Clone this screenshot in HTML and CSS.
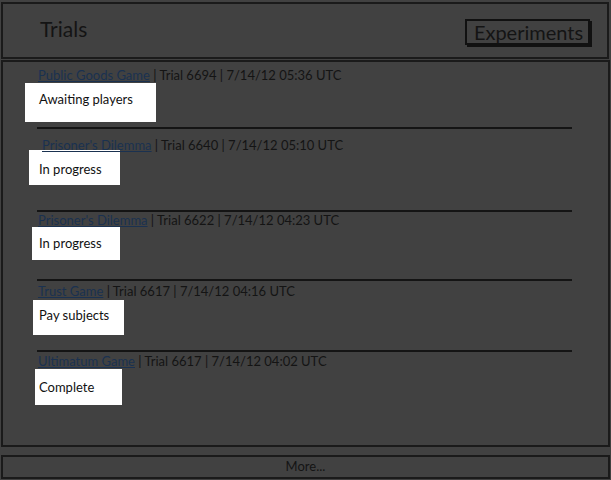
FILE: index.html
```html
<!DOCTYPE html>
<html>
<head>
<meta charset="utf-8">
<link rel="stylesheet" href="styles.css">
</head>
<body>
<div class="page">
  <header class="header">
    <h1 class="title">Trials</h1>
    <button class="btn">Experiments</button>
  </header>
  <main class="content">
    <div class="item i1">
      <div class="meta"><a href="#">Public Goods Game</a> | Trial 6694 | 7/14/12 05:36 UTC</div>
      <div class="status">Awaiting players</div>
    </div>
    <div class="item i2">
      <div class="meta"><a href="#">Prisoner's Dilemma</a> | Trial 6640 | 7/14/12 05:10 UTC</div>
      <div class="status">In progress</div>
    </div>
    <div class="item i3">
      <div class="meta"><a href="#">Prisoner's Dilemma</a> | Trial 6622 | 7/14/12 04:23 UTC</div>
      <div class="status">In progress</div>
    </div>
    <div class="item i4">
      <div class="meta"><a href="#">Trust Game</a> | Trial 6617 | 7/14/12 04:16 UTC</div>
      <div class="status">Pay subjects</div>
    </div>
    <div class="item i5">
      <div class="meta"><a href="#">Ultimatum Game</a> | Trial 6617 | 7/14/12 04:02 UTC</div>
      <div class="status">Complete</div>
    </div>
  </main>
  <footer class="more">More...</footer>
</div>
</body>
</html>
```
FILE: styles.css
```css
* { box-sizing: border-box; }
html, body { margin: 0; padding: 0; }
body {
  background: #414141;
  font-family: "Lato", "Liberation Sans", sans-serif;
  color: #141414;
  width: 611px;
  height: 480px;
  overflow: hidden;
}
.page {
  display: flex;
  flex-direction: column;
  padding: 2px 1px 0 1px;
}
.header {
  height: 57px;
  border: 2px solid #1a1a1a;
  margin-right: 1px;
  display: flex;
  justify-content: space-between;
  align-items: flex-start;
  padding: 0 17px 0 37px;
}
.title {
  margin: 12px 0 0 0;
  font-size: 21px;
  font-weight: normal;
  line-height: 26px;
}
.btn {
  margin-top: 15px;
  height: 26px;
  width: 125px;
  background: transparent;
  border: 2px solid #111;
  box-shadow: 2px 2px 0 #111;
  font-family: inherit;
  font-size: 20px;
  line-height: 20px;
  color: #141414;
  padding: 0 0 0 2px;
}
.content {
  height: 387px;
  margin-top: 1px;
  border: 2px solid #1a1a1a;
  padding: 5px 0 0 0;
  font-size: 13px;
}
.item {
  margin-left: 34px;
  width: 535px;
}
.item + .item { border-top: 2px solid #141414; }
.meta {
  line-height: 16px;
  white-space: nowrap;
}
.meta a {
  color: #1a3150;
  text-decoration: underline;
}
.status {
  background: #fff;
  color: #111;
  line-height: 16px;
}
.i1 .meta { padding-left: 1px; }
.i1 .status { margin: 0 0 0 -12px; width: 131px; height: 39px; padding: 8px 0 0 14px; }
.i1 { padding-bottom: 5px; }
.i2 .meta { padding: 8px 0 0 5px; }
.i2 .status { margin: -3px 0 0 -8px; width: 91px; height: 35px; padding: 11px 0 0 10px; }
.i2 { padding-bottom: 25px; }
.i3 .meta { padding: 0 0 0 1px; }
.i3 .status { margin: -1px 0 0 -5px; width: 88px; height: 33px; padding: 8px 0 0 7px; }
.i3 { padding-bottom: 19px; }
.i4 .meta { padding: 2px 0 0 1px; }
.i4 .status { margin: 1px 0 0 -4px; width: 91px; height: 35px; padding: 7px 0 0 6px; }
.i4 { padding-bottom: 15px; }
.i5 .meta { padding: 1px 0 0 1px; }
.i5 .status { margin: 0 0 0 -2px; width: 87px; height: 36px; padding: 10px 0 0 4px; }
.more {
  margin-top: 8px;
  height: 24px;
  border: 2px solid #1a1a1a;
  text-align: center;
  font-size: 13px;
  line-height: 19px;
  color: #141414;
}
```
